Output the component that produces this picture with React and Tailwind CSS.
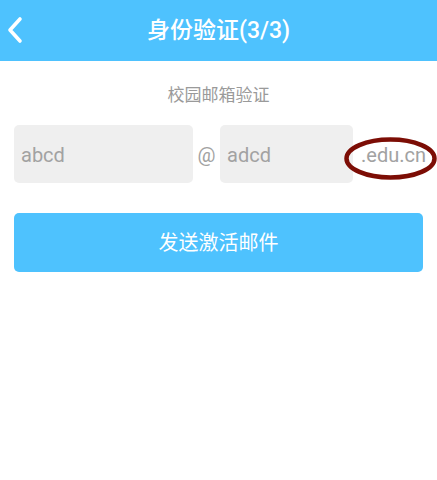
export default function App() {
  const font = { fontFamily: 'Roboto, "Noto Sans CJK SC", sans-serif' };
  return (
    <div className="w-[437px] h-[480px] bg-white relative overflow-hidden" style={font}>
      <div className="h-[61px] bg-[#4ec2fe] relative flex items-center justify-center">
        <svg className="absolute left-[6px] top-[16px]" width="18" height="28" viewBox="0 0 18 28">
          <path d="M14 3 L4 14 L14 25" fill="none" stroke="white" strokeWidth="3.6" strokeLinecap="round" strokeLinejoin="round" />
        </svg>
        <span className="text-white text-[23px] font-medium leading-none">身份验证(3/3)</span>
      </div>
      <div className="mt-[24px] text-center text-[17px] leading-[20px] text-[#9a9a9a]">校园邮箱验证</div>
      <div className="mt-[20px] flex items-center pl-[14px] relative">
        <div className="w-[179px] h-[58px] bg-[#efefef] rounded-[5px] flex items-center pl-[7px] pt-[2px] text-[20px] text-[#a2a2a2]">abcd</div>
        <div className="w-[27px] text-center text-[20px] pt-[2px] text-[#a2a2a2]">@</div>
        <div className="w-[133px] h-[58px] bg-[#efefef] rounded-[5px] flex items-center pl-[7px] pt-[2px] text-[20px] text-[#a2a2a2]">adcd</div>
        <div className="ml-[8px] text-[20px] pt-[2px] text-[#a2a2a2]">.edu.cn</div>
        <svg className="absolute left-[344px] top-[12px]" width="93" height="43" viewBox="0 0 93 43">
          <ellipse cx="46.5" cy="21.5" rx="44" ry="19" fill="none" stroke="#7c0d05" strokeWidth="4.5" />
        </svg>
      </div>
      <div className="mt-[30px] mx-[14px] h-[59px] bg-[#4ec2fe] rounded-[5px] flex items-center justify-center text-white text-[20px]">发送激活邮件</div>
    </div>
  );
}
